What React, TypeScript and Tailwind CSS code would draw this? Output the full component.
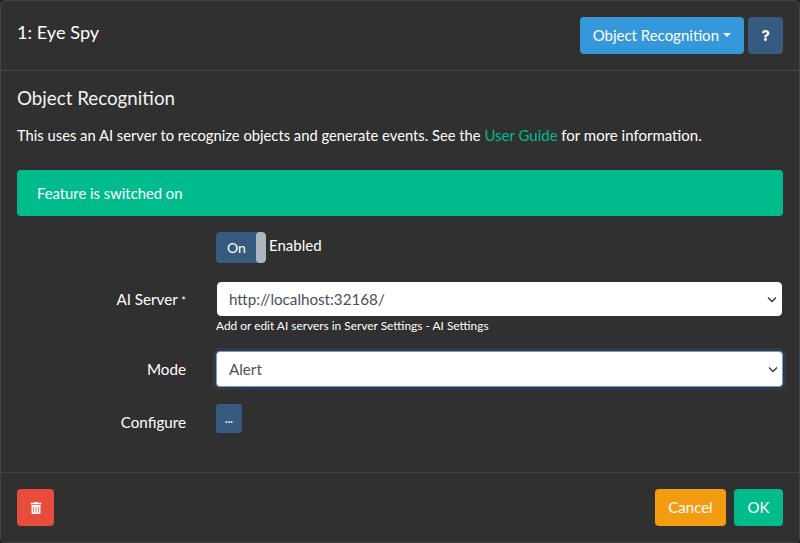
import { FaQuestion, FaTrashAlt } from "react-icons/fa";

function Label({ children }: { children: React.ReactNode }) {
  return <label className="w-[169px] shrink-0 text-right text-[15.2px] leading-[22px] text-white">{children}</label>;
}

function Chevron() {
  return (
    <svg className="pointer-events-none absolute right-[5px] top-1/2 -mt-[3px]" width="10" height="7" viewBox="0 0 10 7" fill="none">
      <path d="M1 1.5 L5 5.5 L9 1.5" stroke="#343a40" strokeWidth="1.4" />
    </svg>
  );
}

export default function App() {
  return (
    <div className="h-[543px] w-[800px] bg-[#222]" style={{ fontFamily: "Lato, sans-serif" }}>
      <div className="flex h-full w-full flex-col rounded-[5px] border border-[#444] bg-[#303030] text-white">
        <div className="flex h-[70px] shrink-0 items-start justify-between border-b border-[#444] pl-4 pr-4 pt-4">
          <h5 className="text-[18.2px] leading-[30px]">1: Eye Spy</h5>
          <div className="flex gap-1">
            <button className="flex h-[37px] items-center gap-1 rounded bg-[#3498db] px-[13px] text-[15px] text-white">
              Object Recognition
              <span className="mt-[-1px] h-0 w-0 border-x-[4.5px] border-t-[4.5px] border-x-transparent border-t-white" />
            </button>
            <button className="flex h-[37px] w-[35px] items-center justify-center rounded bg-[#375a7f] text-white">
              <FaQuestion size={11} />
            </button>
          </div>
        </div>
        <div className="flex-1 px-4 pt-[15px]">
          <h5 className="text-[18.75px] leading-[24px] text-[#f3f3f3]">Object Recognition</h5>
          <p className="mt-[14px] text-[14.75px] leading-[22px]">
            This uses an AI server to recognize objects and generate events. See the{" "}
            <a className="text-[15px] text-[#00bc8c]">User Guide</a> <span className="text-[15px]">for more information.</span>
          </p>
          <div className="mt-[24px] flex h-[46px] items-center rounded bg-[#00bc8c] px-5 text-[14.8px]">Feature is switched on</div>
          <div className="mt-4 flex items-start pl-[199px]">
            <div className="relative flex h-[31px] w-[50px] overflow-hidden rounded bg-[#375a7f] pl-[11px] text-[14px] leading-[31px]">
              On
              <span className="absolute right-0 top-0 h-full w-[10px] rounded-[4px] bg-[#adb5bd]" />
            </div>
            <span className="ml-[3px] text-[15px] leading-[26px]">Enabled</span>
          </div>
          <div className="mt-[19px] flex items-start">
            <div className="flex h-[34px] w-[169px] shrink-0 items-center justify-end pt-[1px]">
              <Label>AI Server <span className="text-[11px]">*</span></Label>
            </div>
            <div className="ml-[31px] flex-1">
              <div className="relative mr-[1px]">
                <select className="block h-[34px] w-full appearance-none rounded-[4px] border border-white bg-white pl-[11px] text-[15.2px] text-[#495057]" defaultValue="a">
                  <option value="a">http://localhost:32168/</option>
                </select>
                <Chevron />
              </div>
              <div className="-ml-[1px] text-[11.9px] leading-[20px] text-white">Add or edit AI servers in Server Settings - AI Settings</div>
            </div>
          </div>
          <div className="mt-[15px] flex items-center">
            <div className="flex w-[169px] shrink-0 justify-end"><Label>Mode</Label></div>
            <div className="relative ml-[30px] flex-1">
              <select className="block h-[36px] w-full appearance-none rounded-[4px] border border-[#739ac2] bg-white pl-[12px] text-[15.2px] text-[#495057] shadow-[0_0_0_3px_rgba(55,90,127,0.25)]" defaultValue="a">
                <option value="a">Alert</option>
              </select>
              <Chevron />
            </div>
          </div>
          <div className="mt-[17px] flex items-center">
            <div className="flex w-[169px] shrink-0 justify-end pt-[7px]"><Label>Configure</Label></div>
            <button className="ml-[30px] flex h-[29px] w-[26px] items-center justify-center rounded-[3px] bg-[#375a7f] text-[11px] font-bold leading-none text-white">...</button>
          </div>
        </div>
        <div className="flex h-[70px] shrink-0 items-start justify-between border-t border-[#444] px-4 pt-4">
          <button className="flex h-[37px] w-[37px] items-center justify-center rounded bg-[#e74c3c] text-white">
            <FaTrashAlt size={12} />
          </button>
          <div className="flex gap-2">
            <button className="h-[37px] w-[71px] rounded bg-[#f39c12] text-[15px]">Cancel</button>
            <button className="h-[37px] w-[49px] rounded bg-[#00bc8c] text-[15px]">OK</button>
          </div>
        </div>
      </div>
    </div>
  );
}
